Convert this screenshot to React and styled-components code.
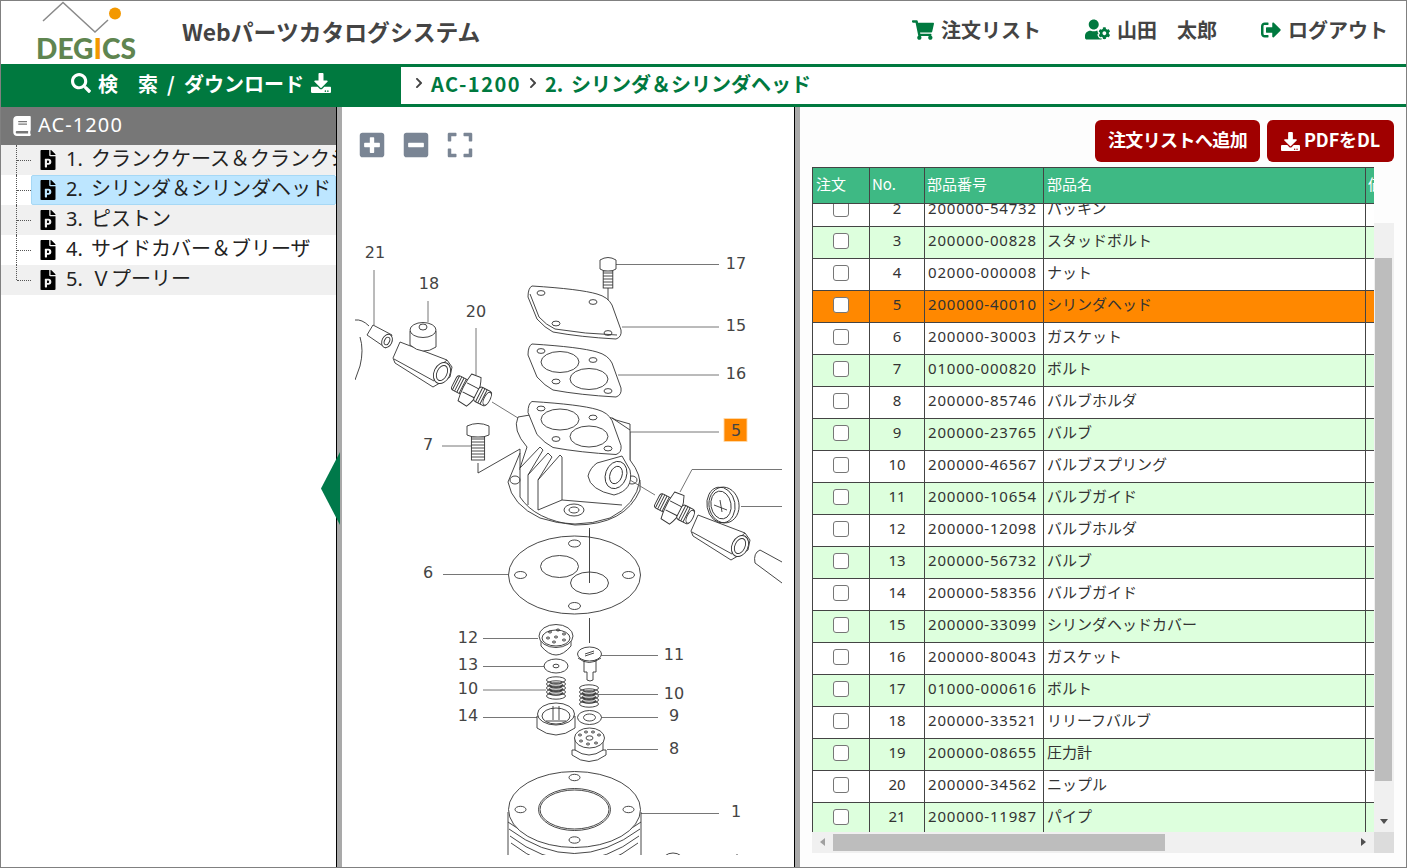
import React from 'react'
import styled, { createGlobalStyle } from 'styled-components'
import {
  FaShoppingCart, FaUserCog, FaSignOutAlt, FaSearch, FaDownload, FaChevronRight,
  FaBook, FaFilePowerpoint, FaPlusSquare, FaMinusSquare, FaExpand,
} from 'react-icons/fa'

const GREEN = '#00793f'
const JP = '"Noto Sans CJK JP", sans-serif'
const LATIN = '"Noto Sans", "Noto Sans CJK JP", sans-serif'

const GlobalStyle = createGlobalStyle`
  html, body { margin: 0; padding: 0; background: #fff; overflow: hidden; }
  * { box-sizing: border-box; }
`

const Frame = styled.div`
  width: 1407px;
  height: 868px;
  border: 1px solid #808080;
  display: flex;
  flex-direction: column;
  font-family: ${JP};
  overflow: hidden;
`

/* header */
const Header = styled.header`
  height: 63px;
  display: flex;
  align-items: center;
  padding: 0 18px 0 34px;
  color: #444;
`
const LogoSvg = styled.svg`
  width: 102px;
  height: 63px;
  display: block;
  flex: none;
  overflow: visible;
`
const Title = styled.h1`
  margin: 0 0 3px 45px;
  font-size: 22.8px;
  font-weight: 700;
  color: #444;
`
const HeaderMenu = styled.nav`
  margin-left: auto;
  display: flex;
  align-items: center;
  gap: 44px;
  padding-bottom: 6px;
`
const MenuItem = styled.a`
  display: flex;
  align-items: center;
  gap: 7px;
  font-size: 20px;
  font-weight: 700;
  color: #444;
  svg { color: ${GREEN}; display: block; }
`

/* green bar */
const NavBar = styled.div`
  height: 43px;
  flex: none;
  background: ${GREEN};
  display: flex;
`
const SearchTab = styled.div`
  width: 400px;
  flex: none;
  display: flex;
  align-items: center;
  justify-content: center;
  gap: 7px;
  color: #fff;
  font-size: 20px;
  font-weight: 700;
  word-spacing: 4.5px;
  padding-bottom: 5px;
  svg { display: block; }
`
const Breadcrumb = styled.div`
  flex: 1;
  margin: 3px 0;
  background: #fff;
  display: flex;
  align-items: center;
  gap: 6px;
  padding: 0 0 5px 12px;
  color: ${GREEN};
  font-size: 20px;
  font-weight: 700;
  svg { color: #444; display: block; }
`
const CrumbModel = styled.span`
  letter-spacing: 1.5px;
`
const CrumbNumber = styled.span`
  margin-right: 3px;
`

/* panes */
const Panes = styled.div`
  flex: 1;
  display: flex;
  min-height: 0;
`
const TreePane = styled.aside`
  width: 335px;
  flex: none;
  overflow: hidden;
`
const TreeHead = styled.div`
  height: 38px;
  background: #777;
  color: #fff;
  display: flex;
  align-items: center;
  gap: 6px;
  padding: 0 0 3px 11px;
  font-size: 20px;
  font-family: ${LATIN};
  letter-spacing: 1.1px;
  svg { display: block; margin-top: 3px; }
`
const TreeRow = styled.div`
  position: relative;
  height: 30px;
  background: ${p => (p.$shade ? '#f0f0f0' : '#fff')};
  padding-left: 30px;
  display: flex;
  align-items: center;
  &::before {
    content: '';
    position: absolute;
    left: 15px;
    top: 0;
    height: ${p => (p.$last ? '15px' : '30px')};
    border-left: 1px dotted #555;
  }
  &::after {
    content: '';
    position: absolute;
    left: 16px;
    width: 14px;
    top: 15px;
    border-top: 1px dotted #555;
  }
`
const TreeLabel = styled.div`
  height: 30px;
  flex: 1;
  min-width: 0;
  display: flex;
  align-items: center;
  gap: 8px;
  padding-left: ${p => (p.$selected ? '6px' : '7px')};
  white-space: nowrap;
  overflow: hidden;
  font-size: 20px;
  line-height: 24px;
  color: #222;
  background: ${p => (p.$selected ? '#bde6ff' : 'transparent')};
  border: ${p => (p.$selected ? '1px solid #a6d8f5' : 'none')};
  border-radius: 2px;
  svg { flex: none; color: #000; display: block; }
`
const TreeText = styled.span`
  padding-bottom: 3px;
`
const TreeNumber = styled.span`
  display: inline-block;
  width: 25px;
  font-family: ${LATIN};
`
const Splitter = styled.div`
  position: relative;
  width: 6px;
  flex: none;
  background: #a9a9a9;
  border-left: 1px solid #000;
`
const CollapseHandle = styled.div`
  position: absolute;
  left: -16px;
  top: 345px;
  width: 19px;
  height: 73px;
  background: #00794a;
  clip-path: polygon(0 50%, 100% 0, 100% 100%);
`

/* diagram */
const DiagramPane = styled.main`
  width: 452px;
  flex: none;
  display: flex;
  flex-direction: column;
  padding: 24px 12px 12px 13px;
  background: #fff;
`
const ZoomBar = styled.div`
  height: 34px;
  flex: none;
  display: flex;
  gap: 16px;
  padding-left: 3px;
  color: #7a8594;
  svg { display: block; }
`
const DiagramSvg = styled.svg`
  width: 427px;
  height: 690px;
  display: block;
  flex: none;
  stroke: #333;
  stroke-width: 0.9;
  fill: none;
  text {
    font-family: "DejaVu Sans", sans-serif;
    font-size: 16px;
    font-weight: 400;
    fill: #444;
    stroke: none;
    text-anchor: middle;
  }
  .leader { stroke: #666; }
  .solid { fill: #fff; }
  .callout { fill: #ff8800; stroke: #ffd9a8; }
`

/* parts list */
const PartsPane = styled.section`
  flex: 1;
  min-width: 0;
  background: #fdfdfd;
  padding: 13px 12px 0 12px;
  display: flex;
  flex-direction: column;
`
const ActionRow = styled.div`
  height: 42px;
  flex: none;
  display: flex;
  justify-content: flex-end;
  gap: 7px;
  margin-bottom: 5px;
`
const ActionButton = styled.button`
  width: ${p => p.$width}px;
  height: 42px;
  border: none;
  border-radius: 6px;
  background: #a00000;
  color: #fff;
  font-family: ${JP};
  font-size: 18px;
  font-weight: 700;
  letter-spacing: ${p => p.$track}px;
  display: flex;
  align-items: center;
  justify-content: center;
  gap: 4px;
  padding: 0 0 4px;
  white-space: nowrap;
  svg { display: block; margin-top: 4px; }
`
const TableFrame = styled.div`
  width: 582px;
  height: 686px;
  display: grid;
  grid-template-columns: 562px 20px;
  grid-template-rows: 665px 21px;
`
const TableClip = styled.div`
  overflow: hidden;
  display: flex;
  flex-direction: column;
`
const columns = '56px 55px 119px 322px 40px'
const HeadRow = styled.div`
  height: 37px;
  flex: none;
  display: grid;
  grid-template-columns: ${columns};
  background: #3eb984;
  border: 1px solid #444;
  border-right: none;
  width: 600px;
  color: #fff;
  font-size: 15px;
`
const HeadCell = styled.div`
  display: flex;
  align-items: center;
  padding: 0 0 5px ${p => p.$pad ?? 3}px;
  white-space: nowrap;
  overflow: hidden;
  &:not(:first-child) { border-left: 1px solid #444; }
`
const RowsClip = styled.div`
  flex: 1;
  overflow: hidden;
`
const RowsScroll = styled.div`
  margin-top: -9px;
`
const PartRow = styled.div`
  height: 32px;
  width: 600px;
  display: grid;
  grid-template-columns: ${columns};
  background: ${p => (p.$active ? '#ff8800' : p.$stripe ? '#ddffdd' : '#fff')};
  border-left: 1px solid #444;
  border-bottom: 1px solid #444;
  color: #333;
  font-size: 15px;
`
const Cell = styled.div`
  display: flex;
  align-items: center;
  white-space: nowrap;
  overflow: hidden;
  justify-content: ${p => (p.$center ? 'center' : 'flex-start')};
  padding: 0 0 5px ${p => p.$pad || 0}px;
  line-height: 20px;
  font-family: ${p => (p.$latin ? LATIN : JP)};
  letter-spacing: ${p => p.$track || 0}px;
  &:not(:first-child) { border-left: 1px solid #444; }
`
const Check = styled.input.attrs({ type: 'checkbox' })`
  appearance: none;
  width: 16px;
  height: 16px;
  margin: 0 0 -1px -1px;
  background: #fff;
  border: 1px solid #767676;
  border-radius: 3px;
`
const VTrack = styled.div`
  margin-top: 56px;
  background: #f0f0f0;
  position: relative;
`
const VThumb = styled.div`
  position: absolute;
  left: 1px;
  top: 35px;
  width: 17px;
  height: 523px;
  background: #bdbdbd;
`
const HTrack = styled.div`
  background: #f0f0f0;
  position: relative;
`
const HThumb = styled.div`
  position: absolute;
  left: 21px;
  top: 2px;
  width: 332px;
  height: 17px;
  background: #bdbdbd;
`
const Corner = styled.div`
  background: #dcdcdc;
`
const Arrow = styled.span`
  position: absolute;
  width: 0;
  height: 0;
  border-style: solid;
  ${p => p.$dir === 'down' && `left: 6px; bottom: 8px; border-width: 5px 4px 0 4px; border-color: #505050 transparent transparent transparent;`}
  ${p => p.$dir === 'left' && `left: 8px; top: 6px; border-width: 4px 5px 4px 0; border-color: transparent #a0a0a0 transparent transparent;`}
  ${p => p.$dir === 'right' && `right: 8px; top: 6px; border-width: 4px 0 4px 5px; border-color: transparent transparent transparent #505050;`}
`

const tree = [
  { no: '1.', name: 'クランクケース＆クランクシャフト', shade: true },
  { no: '2.', name: 'シリンダ＆シリンダヘッド', selected: true },
  { no: '3.', name: 'ピストン', shade: true },
  { no: '4.', name: 'サイドカバー＆ブリーザ' },
  { no: '5.', name: 'Ｖプーリー', shade: true, last: true },
]

const parts = [
  [2, '200000-54732', 'パッキン'],
  [3, '200000-00828', 'スタッドボルト'],
  [4, '02000-000008', 'ナット'],
  [5, '200000-40010', 'シリンダヘッド'],
  [6, '200000-30003', 'ガスケット'],
  [7, '01000-000820', 'ボルト'],
  [8, '200000-85746', 'バルブホルダ'],
  [9, '200000-23765', 'バルブ'],
  [10, '200000-46567', 'バルブスプリング'],
  [11, '200000-10654', 'バルブガイド'],
  [12, '200000-12098', 'バルブホルダ'],
  [13, '200000-56732', 'バルブ'],
  [14, '200000-58356', 'バルブガイド'],
  [15, '200000-33099', 'シリンダヘッドカバー'],
  [16, '200000-80043', 'ガスケット'],
  [17, '01000-000616', 'ボルト'],
  [18, '200000-33521', 'リリーフバルブ'],
  [19, '200000-08655', '圧力計'],
  [20, '200000-34562', 'ニップル'],
  [21, '200000-11987', 'パイプ'],
]

const Logo = () => (
  <LogoSvg viewBox="0 0 102 63">
    <polyline points="8,20 28,1.5 60,31 73,19" fill="none" stroke="#8a8a8a" strokeWidth="1.5" />
    <circle cx="80" cy="12.5" r="6" fill="#f39800" />
    <text x="1" y="58" textLength="100" lengthAdjust="spacingAndGlyphs" fontFamily="Lato, sans-serif" fontWeight="900" fontSize="28.5" fill="#5f8550">
      DEG<tspan fill="#f39800">I</tspan>CS
    </text>
  </LogoSvg>
)

const Label = ({ x, y, children }) => <text x={x} y={y + 6}>{children}</text>

const Lead = ({ d }) => <path className="leader" d={d} />

const Nut = ({ x, y }) => (
  <g transform={`translate(${x} ${y}) rotate(27)`}>
    <rect className="solid" x="-20" y="-8" width="13" height="16" rx="3" />
    {[-18, -15.5, -13, -10.5].map(v => <line key={v} x1={v} y1="-8" x2={v} y2="8" />)}
    <path className="solid" d="M-8 -15 L2 -16 Q6 -8 6 0 Q6 8 2 16 L-8 15 Q-11 0 -8 -15 Z" />
    <line x1="-8" y1="-5" x2="5" y2="-5" />
    <line x1="-8" y1="5" x2="5" y2="5" />
    <rect className="solid" x="5" y="-8" width="14" height="16" rx="3" />
    {[8, 10.5, 13].map(v => <line key={v} x1={v} y1="-8" x2={v} y2="8" />)}
    <ellipse className="solid" cx="17" cy="0" rx="3" ry="7" />
  </g>
)

const Fitting = ({ x = 0, y = 0 }) => (
  <g transform={`translate(${x} ${y})`}>
    <path className="solid" d="M400 342 L447 360 L452 367 L450 377 L433 387 L395 363 L393 358 Z" />
    <line x1="394" y1="359" x2="434" y2="381" />
    <line x1="447" y1="360" x2="434" y2="371" />
    <ellipse className="solid" cx="442" cy="373" rx="8" ry="11" transform="rotate(25 442 373)" />
    <ellipse cx="442" cy="373" rx="5" ry="8" transform="rotate(25 442 373)" />
  </g>
)

const Plate = ({ y = 0, holes = false, lip = false }) => (
  <g transform={`translate(0 ${y})`}>
    <path className="solid" d="M532 344 Q580 347 597 352 Q608 355 612 363 L621 388 Q622 395 616 397 Q580 395 553 390 Q545 386 537 377 L528 355 Q528 346 532 344 Z" />
    {lip && <path d="M530 352 L539 375 Q546 383 555 387 Q585 392 617 393" />}
    {holes && <ellipse cx="560" cy="362" rx="19" ry="10.5" />}
    {holes && <ellipse cx="589" cy="379" rx="19" ry="10.5" />}
    <ellipse cx="541" cy="351" rx="4" ry="2.4" />
    <ellipse cx="593" cy="360" rx="4" ry="2.4" />
    <ellipse cx="556" cy="381.5" rx="4" ry="2.4" />
    <ellipse cx="608" cy="391" rx="4" ry="2.4" />
  </g>
)

const Spring = ({ x, y }) => (
  <g>
    {[0, 4, 8, 12, 16].map(d => <ellipse key={d} cx={x} cy={y + d} rx="9.5" ry="3.2" />)}
    {[5, 9, 13].map(d => <ellipse key={d} cx={x} cy={y + d} rx="7" ry="2" />)}
  </g>
)

const Bolt = ({ x, y, w, h }) => (
  <g>
    <path className="solid" d={`M${x - w} ${y - 4} Q${x} ${y - 9} ${x + w} ${y - 4} L${x + w} ${y + 5} Q${x} ${y + 10} ${x - w} ${y + 5} Z`} />
    <rect className="solid" x={x - w * 0.6} y={y + 7} width={w * 1.2} height={h} />
    {Array.from({ length: Math.floor(h / 3) }, (_, i) => (
      <line key={i} x1={x - w * 0.6} y1={y + 9 + i * 3} x2={x + w * 0.6} y2={y + 9 + i * 3} />
    ))}
  </g>
)

const Diagram = () => (
  <DiagramSvg viewBox="355 165 427 690">
    <Label x={375} y={252}>21</Label>
    <Label x={429} y={283}>18</Label>
    <Label x={476} y={311}>20</Label>
    <Label x={736} y={263}>17</Label>
    <Label x={736} y={325}>15</Label>
    <Label x={736} y={373}>16</Label>
    <rect className="callout" x="724" y="418.5" width="23" height="23" />
    <Label x={736} y={430}>5</Label>
    <Label x={428} y={444}>7</Label>
    <Label x={428} y={572}>6</Label>
    <Label x={468} y={637}>12</Label>
    <Label x={468} y={664}>13</Label>
    <Label x={468} y={688}>10</Label>
    <Label x={468} y={715}>14</Label>
    <Label x={674} y={654}>11</Label>
    <Label x={674} y={693}>10</Label>
    <Label x={674} y={715}>9</Label>
    <Label x={674} y={748}>8</Label>
    <Label x={736} y={811}>1</Label>

    <Lead d="M374 270 V325 M428 301 V322 M476 328 V375 M616 264.5 H719 M622 327 H719 M618 375 H719 M630 432 H719 M630 432 V470" />
    <Lead d="M442 446 H471 M492 402 L518 418 M443 574.5 H508 M483 638.5 H538 M483 666.5 H544 M483 690 H546 M483 717.5 H537" />
    <Lead d="M601 655.5 H658 M598 694.5 H658 M601 717.5 H658 M607 749.5 H658 M641 813.5 H719 M741 506.5 H782 M680 492 L692 469.5 H782" />
    <path d="M478 463 V473 L520 449 V470 M608 287 V325 M589.5 528 V583 M589.5 618 V643" />

    {/* hose and fitting on the left */}
    <path d="M355 320 Q362 319 369 326 M360 337 Q364 350 360 366 L355 380" />
    <path className="solid" d="M367 335 L373 325 L392 335 L386 348 Z" />
    <ellipse className="solid" cx="387" cy="341" rx="5" ry="7" transform="rotate(25 387 341)" />
    <ellipse cx="387" cy="341" rx="2.5" ry="4" transform="rotate(25 387 341)" />
    <Fitting />
    <path className="solid" d="M410 331 V345 Q423 356 436 347 V331 Z" />
    <ellipse className="solid" cx="423" cy="330" rx="13" ry="7.5" />
    <ellipse cx="423" cy="327" rx="4" ry="3" />
    <Nut x={472} y={391} />

    {/* valve chest */}
    <path className="solid" d="M518 417 Q512 430 527 447 L520 468 V497 Q535 520 575 525 Q625 525 640 490 Q642 475 630 460 V430 L612 418 L560 410 Z" />
    <path d="M508 482 L520 453 M508 482 Q512 505 540 518 Q575 530 610 518 Q636 505 640 480" />
    <path d="M520 468 L540 447 L543 450 L528 475 L548 453 L552 457 L538 480 L560 455 L562 457 V500 L538 510" />
    <path d="M528 475 V505 M538 480 V510 M562 500 L622 505" />
    <ellipse cx="574" cy="510" rx="10" ry="6" />
    <ellipse cx="574" cy="510" rx="5" ry="3" />
    <ellipse cx="632" cy="480" rx="5" ry="4" />
    <ellipse cx="515" cy="480" rx="5" ry="4" />
    <Plate y={57.5} holes />
    <path className="solid" d="M597 463 L622 456 L630 470 Q634 490 614 495 Q590 490 588 476 Q590 468 597 463 Z" />
    <ellipse className="solid" cx="616" cy="475" rx="10.5" ry="14" transform="rotate(20 616 475)" />
    <ellipse cx="616" cy="475" rx="6" ry="9" transform="rotate(20 616 475)" />
    <path d="M612 418 L616 420 L630 424 V430" />

    {/* cover and gasket */}
    <Plate y={-58} lip />
    <Plate holes />
    <Bolt x={608} y={264} w={8} h={17} />
    <Bolt x={478} y={430} w={11} h={23} />

    {/* right side pressure gauge */}
    <Nut x={675} y={509} />
    <path d="M630 480 L655 495" className="leader" />
    <Fitting x={298} y={173} />
    <ellipse className="solid" cx="724" cy="505" rx="15" ry="18" transform="rotate(-10 724 505)" />
    <ellipse cx="721" cy="505" rx="14" ry="18" transform="rotate(-10 721 505)" />
    <ellipse cx="721" cy="505" rx="10" ry="14" transform="rotate(-10 721 505)" />
    <path d="M714 505 L727 510 M720 500 L722 512" />
    <path d="M782 562 L760 550 Q753 553 755 563 L782 583" />

    {/* gasket 6 */}
    <ellipse className="solid" cx="574.5" cy="575" rx="66" ry="39" />
    <ellipse cx="559.5" cy="566.5" rx="19" ry="11" />
    <ellipse cx="589.5" cy="583" rx="19" ry="11" />
    <path d="M589.5 530 V583" />
    <ellipse cx="574.5" cy="543.5" rx="6" ry="3.5" />
    <ellipse cx="520.5" cy="575" rx="6" ry="3.5" />
    <ellipse cx="628.5" cy="575" rx="6" ry="3.5" />
    <ellipse cx="574.5" cy="606" rx="6" ry="3.5" />

    {/* valve parts */}
    <path className="solid" d="M541 640 V646 Q556 664 571 646 V640 Z" />
    <ellipse className="solid" cx="556" cy="636" rx="17" ry="11.5" />
    <ellipse cx="556" cy="638" rx="14" ry="8" />
    {[[550, 632], [558, 630], [564, 634], [548, 638], [556, 637], [564, 640], [554, 642]].map(([x, y]) => (
      <ellipse key={`${x}${y}`} cx={x} cy={y} rx="1.6" ry="1" />
    ))}
    <ellipse className="solid" cx="556" cy="666" rx="12" ry="7" />
    <ellipse cx="556" cy="666" rx="3" ry="1.8" />
    <Spring x={556} y={680} />
    <path className="solid" d="M537 716 V728 Q556 742 575 728 V716 Z" />
    <ellipse className="solid" cx="556" cy="714" rx="18.5" ry="11" />
    <ellipse cx="556" cy="716" rx="14" ry="8" />
    <path d="M553 706 V720 M559 706 V720 M546 721 H566" />
    <path className="solid" d="M584 660 V672 H587 V680 Q590 682 593 680 V672 H596 V660 Z" />
    <ellipse className="solid" cx="589.5" cy="654" rx="12" ry="7" />
    <path d="M578 658 Q589 667 601 658" />
    <path d="M585 654 L594 651 M585 656 L594 653" />
    <Spring x={589} y={688} />
    <ellipse className="solid" cx="589.5" cy="717.5" rx="12" ry="7" />
    <ellipse cx="589.5" cy="717.5" rx="6" ry="3.5" />
    <path className="solid" d="M572 750 V755 Q589 768 606 755 V750 Z" />
    <path className="solid" d="M575 738 V750 Q589 760 603 750 V738 Z" />
    <ellipse className="solid" cx="589.5" cy="738" rx="15" ry="10" />
    <ellipse cx="589.5" cy="738" rx="3.5" ry="2.2" />
    {[[580, 735], [586, 732], [593, 732], [599, 735], [581, 741], [588, 744], [596, 743]].map(([x, y]) => (
      <ellipse key={`${x}${y}`} cx={x} cy={y} rx="1.6" ry="1" />
    ))}

    {/* cylinder */}
    <path d="M508 812 V860 M641 812 V860" />
    <path d="M508 822 Q574 872 641 822 M509 829 Q574 878 640 829 M510 836 Q574 885 639 836 M511 843 Q574 892 638 843" />
    <ellipse className="solid" cx="574.5" cy="809.5" rx="66" ry="38" />
    <ellipse cx="574.5" cy="809.5" rx="36" ry="21" />
    <ellipse cx="574.5" cy="809.5" rx="34.5" ry="19.5" />
    <ellipse cx="574.5" cy="777.5" rx="5.5" ry="3.2" />
    <ellipse cx="520.5" cy="809.5" rx="5.5" ry="3.2" />
    <ellipse cx="628.5" cy="809.5" rx="5.5" ry="3.2" />
    <ellipse cx="574.5" cy="840" rx="5.5" ry="3.2" />
    <ellipse cx="673" cy="862" rx="11" ry="9" />
    <ellipse cx="673" cy="862" rx="7" ry="6" />
    <path d="M737 854 V856" />
  </DiagramSvg>
)

export default function App() {
  return (
    <Frame>
      <GlobalStyle />
      <Header>
        <Logo />
        <Title>Webパーツカタログシステム</Title>
        <HeaderMenu>
          <MenuItem><FaShoppingCart size={22} />注文リスト</MenuItem>
          <MenuItem><FaUserCog size={25} />山田　太郎</MenuItem>
          <MenuItem><FaSignOutAlt size={20} />ログアウト</MenuItem>
        </HeaderMenu>
      </Header>

      <NavBar>
        <SearchTab>
          <FaSearch size={20} />
          <span>検　索 / ダウンロード</span>
          <FaDownload size={20} />
        </SearchTab>
        <Breadcrumb>
          <FaChevronRight size={12} />
          <CrumbModel>AC-1200</CrumbModel>
          <FaChevronRight size={12} />
          <span><CrumbNumber>2.</CrumbNumber> シリンダ＆シリンダヘッド</span>
        </Breadcrumb>
      </NavBar>

      <Panes>
        <TreePane>
          <TreeHead><FaBook size={20} />AC-1200</TreeHead>
          {tree.map(item => (
            <TreeRow key={item.no} $shade={item.shade} $last={item.last}>
              <TreeLabel $selected={item.selected}>
                <FaFilePowerpoint size={20} />
                <TreeText><TreeNumber>{item.no}</TreeNumber>{item.name}</TreeText>
              </TreeLabel>
            </TreeRow>
          ))}
        </TreePane>
        <Splitter><CollapseHandle /></Splitter>

        <DiagramPane>
          <ZoomBar>
            <FaPlusSquare size={28} />
            <FaMinusSquare size={28} />
            <FaExpand size={28} />
          </ZoomBar>
          <Diagram />
        </DiagramPane>
        <Splitter />

        <PartsPane>
          <ActionRow>
            <ActionButton $width={165} $track={-0.6}>注文リストへ追加</ActionButton>
            <ActionButton $width={127} $track={-0.1}><FaDownload size={19} />PDFをDL</ActionButton>
          </ActionRow>
          <TableFrame>
            <TableClip>
              <HeadRow>
                <HeadCell>注文</HeadCell>
                <HeadCell $pad={2}>No.</HeadCell>
                <HeadCell $pad={2}>部品番号</HeadCell>
                <HeadCell>部品名</HeadCell>
                <HeadCell $pad={2}>価格</HeadCell>
              </HeadRow>
              <RowsClip>
                <RowsScroll>
                  {parts.map(([no, code, name], i) => (
                    <PartRow key={no} $stripe={i % 2 === 1} $active={no === 5}>
                      <Cell $center><Check /></Cell>
                      <Cell $center $latin>{no}</Cell>
                      <Cell $latin $pad={3} $track={0.8}>{code}</Cell>
                      <Cell $pad={3}>{name}</Cell>
                      <Cell />
                    </PartRow>
                  ))}
                </RowsScroll>
              </RowsClip>
            </TableClip>
            <VTrack><VThumb /><Arrow $dir="down" /></VTrack>
            <HTrack><HThumb /><Arrow $dir="left" /><Arrow $dir="right" /></HTrack>
            <Corner />
          </TableFrame>
        </PartsPane>
      </Panes>
    </Frame>
  )
}
